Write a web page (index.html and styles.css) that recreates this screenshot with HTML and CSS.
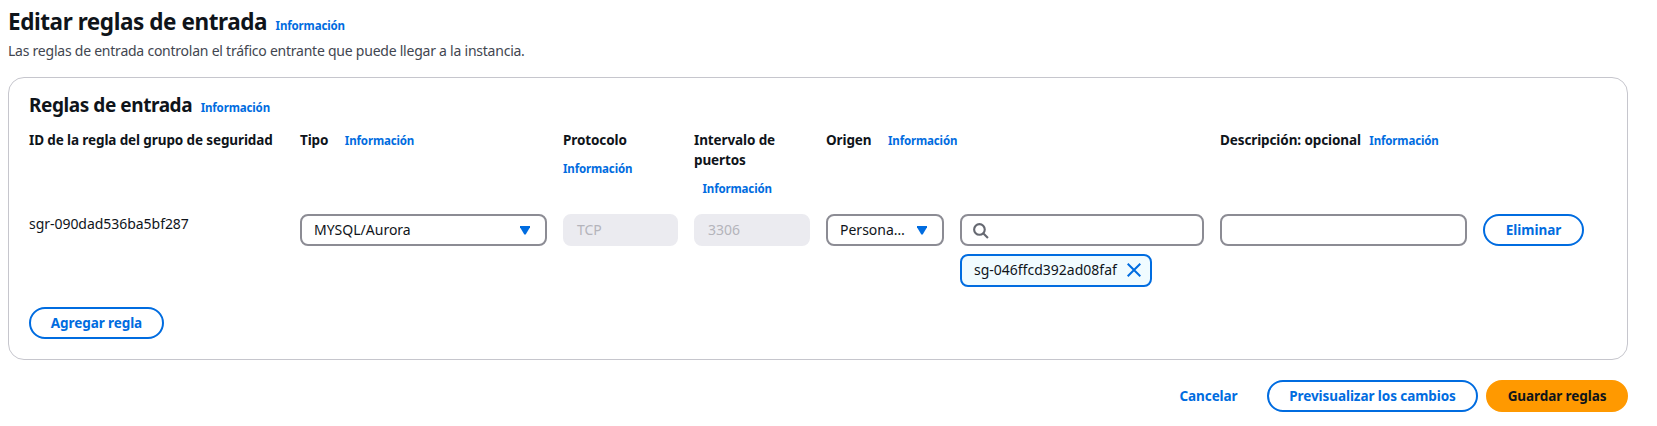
FILE: index.html
```html
<!DOCTYPE html>
<html lang="es">
<head>
<meta charset="utf-8">
<title>Editar reglas de entrada</title>
<link rel="stylesheet" href="styles.css">
</head>
<body>
<main class="page">
  <header class="page-header">
    <div class="heading"><h1 class="title">Editar reglas de entrada</h1><a class="info">Información</a></div>
    <p class="description">Las reglas de entrada controlan el tráfico entrante que puede llegar a la instancia.</p>
  </header>

  <section class="card">
    <div class="heading"><h2 class="subtitle">Reglas de entrada</h2><a class="info">Información</a></div>

    <div class="grid labels">
      <div class="label">ID de la regla del grupo de seguridad</div>
      <div class="label label-wide">Tipo <a class="info">Información</a></div>
      <div class="label label-stacked">Protocolo <a class="info">Información</a></div>
      <div class="label label-stacked">Intervalo de puertos <a class="info info-indented">Información</a></div>
      <div class="label label-wide">Origen <a class="info">Información</a></div>
      <div class="label label-tight">Descripción: opcional <a class="info">Información</a></div>
    </div>

    <div class="grid rule">
      <div class="rule-id">sgr-090dad536ba5bf287</div>
      <div class="field select"><span>MYSQL/Aurora</span><svg class="caret" viewBox="0 0 10 9"><path d="M0 0h10v1.200L5.700 8.500H4.300L0 1.200z" fill="#006ce0"/></svg></div>
      <div class="field disabled">TCP</div>
      <div class="field disabled">3306</div>
      <div class="origin">
        <div class="field select"><span>Persona…</span><svg class="caret" viewBox="0 0 10 9"><path d="M0 0h10v1.200L5.700 8.500H4.300L0 1.200z" fill="#006ce0"/></svg></div>
        <div class="origin-search">
          <div class="field search"><svg class="search-icon" viewBox="0 0 16 16" fill="none" stroke="#656871" stroke-width="2"><circle cx="7" cy="7" r="5"/><path d="M10.500 10.500L15 15"/></svg></div>
          <div class="token"><span>sg-046ffcd392ad08faf</span><svg class="close-icon" viewBox="0 0 14 14" fill="none" stroke="#006ce0" stroke-width="2"><path d="M.700.700l12.600 12.600M13.300.700L.700 13.300"/></svg></div>
        </div>
      </div>
      <div class="field"></div>
      <button class="button remove">Eliminar</button>
    </div>

    <button class="button add">Agregar regla</button>
  </section>

  <footer class="actions">
    <button class="button link">Cancelar</button>
    <button class="button preview">Previsualizar los cambios</button>
    <button class="button primary">Guardar reglas</button>
  </footer>
</main>
</body>
</html>
```

FILE: styles.css
```css
* { box-sizing: border-box; }

body {
  margin: 0;
  background: #fff;
  color: #0f141a;
  font: 400 14px/20px "Noto Sans", "Open Sans", sans-serif;
}

.page { padding: 7px 29px 0 8px; }

.heading { display: flex; align-items: baseline; gap: 8.500px; }
.title { margin: 0; font-size: 22.500px; line-height: 30px; font-weight: 700; letter-spacing: -.43px; }
.subtitle { margin: 0; font-size: 19px; line-height: 24px; font-weight: 700; letter-spacing: -.43px; }
.info { color: #006ce0; font-size: 11.500px; line-height: 20px; font-weight: 700; letter-spacing: -.14px; white-space: nowrap; }
.description { margin: 4px 0 0; color: #424650; letter-spacing: -.235px; }

.card {
  height: 283px;
  margin-top: 16px;
  padding: 15px 20px 0;
  border: 1px solid #c6c6cd;
  border-radius: 16px;
}

.grid {
  display: grid;
  grid-template-columns: 255px 247px 115px 116px 378px 247px 101px;
  column-gap: 16px;
}
.labels { height: 84px; margin-top: 12px; }
.label { font-size: 13.500px; font-weight: 700; line-height: 20px; letter-spacing: -.11px; white-space: nowrap; }
.label-wide { display: flex; align-items: baseline; gap: 16.500px; }
.label-tight { display: flex; align-items: baseline; gap: 8.500px; }
.label-stacked { white-space: normal; }
.label-stacked .info { display: block; margin-top: 9px; }
.label-stacked .info-indented { margin-left: 8.500px; }

.rule-id { letter-spacing: -.04px; }
.field {
  display: flex;
  align-items: center;
  height: 32px;
  padding: 0 12px;
  border: 2px solid #8c8c94;
  border-radius: 8px;
}
.select { justify-content: space-between; padding: 0 15px 0 12px; }
.caret { width: 10px; height: 9px; }
.disabled { border-color: #ebebf0; background: #ebebf0; color: #b4b4bb; }
.origin { display: grid; grid-template-columns: 118px 244px; column-gap: 16px; }
.origin-search { display: flex; flex-direction: column; align-items: flex-start; gap: 8px; }
.search { width: 100%; padding-left: 10px; }
.search-icon { width: 17px; height: 17px; }
.token {
  display: flex;
  align-items: center;
  gap: 10px;
  height: 33px;
  padding: 0 9px 1px 12px;
  border: 2px solid #006ce0;
  border-radius: 8px;
  background: #f0fbff;
}
.close-icon { width: 14px; height: 14px; }

.button {
  height: 32px;
  padding: 0;
  border: 2px solid #006ce0;
  border-radius: 16px;
  background: #fff;
  color: #006ce0;
  font: 700 13.500px/20px "Noto Sans", "Open Sans", sans-serif;
  letter-spacing: -.08px;
}
.remove { letter-spacing: 0; }
.add { display: block; width: 135px; margin-top: 20px; }

.actions { display: flex; justify-content: flex-end; gap: 8px; margin-top: 20px; }
.link { width: 101px; border-color: transparent; }
.preview { width: 211px; }
.primary { width: 142px; border-color: #ff9900; background: #ff9900; color: #0f141a; }
```
